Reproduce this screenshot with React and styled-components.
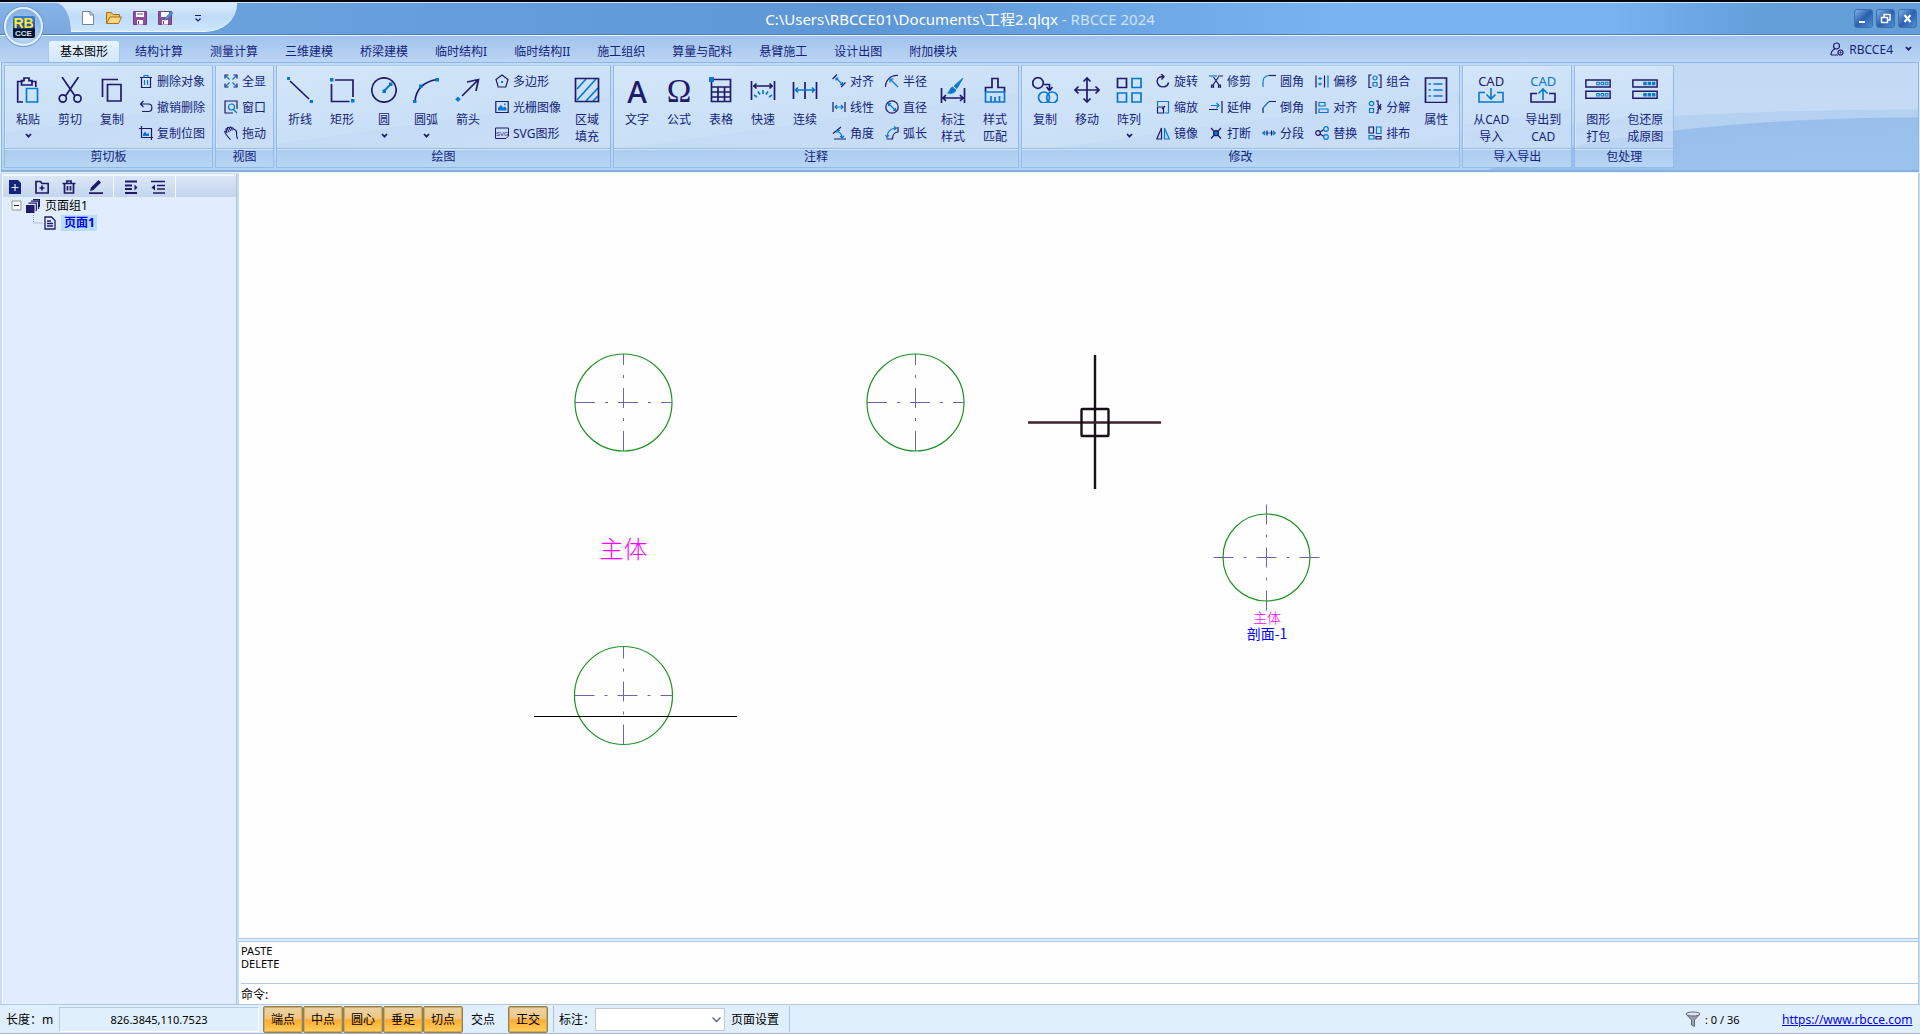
import React, { useState } from "react";
import styled, { createGlobalStyle } from "styled-components";

const ui = `"Noto Sans", "Noto Sans CJK SC", sans-serif`;
const navy = "#1f1a6b";
const blue = "#0a78cc";

const GlobalStyle = createGlobalStyle`
  * { box-sizing: border-box; }
  body { margin: 0; background: #dfecfb; overflow: hidden; }
  button, select, input { font: inherit; color: inherit; }
  button { border: 0; background: none; padding: 0; cursor: pointer; }
`;

const Window = styled.div`
  display: flex;
  flex-direction: column;
  height: 100vh;
  border-top: 2px solid #05070c;
  font: 12px/17px ${ui};
  color: #14247c;
`;

// Title bar
const TitleBar = styled.header`
  position: relative;
  display: flex;
  justify-content: space-between;
  height: 33px;
  border-top: 1px solid #cfe5fb;
  border-bottom: 1px solid #4f80c0;
  background: linear-gradient(90deg, #6da4de 0%, #679fdc 20%, #5d97d6 45%, #78b4f2 70%, #76b3f0 84%, #629ed8 92%, #659ed8 100%);
`;

const QuickBar = styled.div`
  display: flex;
  align-items: flex-start;
  width: 237px;
  height: 29px;
  border-radius: 0 0 32px 0 / 0 0 28px 0;
  border-bottom: 1px solid #eef7ff;
  background: linear-gradient(#d9ebfb, #bfdcf8 50%, #cde6fc);
`;

const AppCorner = styled.div`
  width: 71px;
  height: 31px;
  margin-right: 9px;
  border-radius: 0 15px 0 0 / 0 30px 0 0;
  background: linear-gradient(#86b4e8, #7aa8de);
`;

const AppButton = styled.button`
  position: absolute;
  z-index: 2;
  left: 4px;
  top: 4px;
  width: 39px;
  height: 39px;
  display: flex;
  align-items: center;
  justify-content: center;
  border: 2px solid #e2f1ff;
  border-radius: 50%;
  background: radial-gradient(circle at 50% 70%, #cfe6fb, #8fb9e8 60%, #7aa7dc);
  box-shadow: 0 0 0 1px #7399c9;
`;

const AppMark = styled.span`
  display: flex;
  flex-direction: column;
  align-items: center;
  width: 22px;
  height: 22px;
  border-radius: 2px;
  background: linear-gradient(#3b82d8, #1c4c94 55%, #0a142e 60%);
  color: #ffe83a;
  font: bold 14px/14px "Liberation Sans", sans-serif;
`;

const AppMarkSub = styled.span`
  color: #d5e2f5;
  font: bold 8px/7px "Liberation Sans", sans-serif;
`;

const QuickButton = styled.button`
  width: 16px;
  height: 16px;
  margin: 7px 10px 0 0;
  line-height: 0;
`;

const Title = styled.h1`
  position: absolute;
  left: 50%;
  top: 6px;
  margin: 0;
  transform: translateX(-50%);
  color: #fff;
  font: 15px/20px ${ui};
  white-space: nowrap;
`;

const TitleApp = styled.span`
  color: #cfe3fa;
`;

const WindowButtons = styled.div`
  display: flex;
  gap: 3px;
  padding: 6px 3px 0 0;
`;

const WindowButton = styled.button`
  width: 19px;
  height: 19px;
  border: 1px solid #3c6fb0;
  border-radius: 3px;
  line-height: 0;
  background: linear-gradient(135deg, #7fb0e6, #2c5fae 50%, #4f90d6);
`;

// Tabs
const TabBar = styled.nav`
  display: flex;
  align-items: flex-end;
  gap: 3px;
  height: 27px;
  padding-left: 48px;
  border-top: 1px solid #eaf4ff;
  background: linear-gradient(#a2c3ec, #bad5f5);
`;

const Tab = styled.button`
  height: 22px;
  padding: 0 11px;
  border: 1px solid ${(p) => (p.$active ? "#a4c8f0" : "transparent")};
  border-bottom: 0;
  border-radius: 3px 3px 0 0;
  white-space: nowrap;
  color: ${(p) => (p.$active ? "#000" : "#14247c")};
  background: ${(p) => (p.$active ? "linear-gradient(#e6f3ff, #d3e6fa)" : "none")};
`;

const UserButton = styled.button`
  display: flex;
  align-items: center;
  gap: 5px;
  height: 26px;
  margin-left: auto;
  padding-right: 8px;
`;

const UserName = styled.span`
  margin-right: 7px;
`;

// Ribbon
const Ribbon = styled.section`
  display: flex;
  gap: 2px;
  margin: 0 1px;
  padding: 2px 2px 2px;
  border: 1px solid #8db6e8;
  border-bottom: 2px solid #86afe2;
  background:
    radial-gradient(ellipse 484px 96px at 100% 150px, #9cc2ee 0, #9cc2ee 60%, #98beeb 99%, transparent 100%),
    radial-gradient(ellipse 700px 104px at 100% 150px, #b4d1f2 99%, transparent 100%),
    linear-gradient(#c3daf4, #c4daf5 45%, #b5d2f3);
`;

const GroupBox = styled.div`
  border: 1px solid #94bbe8;
  border-top-color: #a9c9ee;
  box-shadow: inset 0 1px #fff, inset 1px 0 #e1effd;
`;

const GroupBody = styled.div`
  display: flex;
  height: 82px;
  padding: 2px 2px 0;
  background: linear-gradient(172deg, rgba(213, 231, 249, 0.9) 0, rgba(203, 225, 247, 0.85) 60%, rgba(200, 221, 246, 0.7) 61%, rgba(214, 228, 250, 0.6) 100%);
`;

const GroupTitle = styled.div`
  height: 19px;
  border-top: 1px solid #94bbe8;
  box-shadow: inset 0 1px #d4e6fa;
  line-height: 16px;
  text-align: center;
  background: linear-gradient(#abcbef, #b8d6f5);
`;

const BigButton = styled.button`
  display: flex;
  flex-direction: column;
  align-items: center;
  min-width: 42px;
  height: 79px;
  padding: 9px 8px 0;
  white-space: pre;
`;

const BigLabel = styled.span`
  margin-top: 8px;
`;

const BigIcon = styled.span`
  display: flex;
  justify-content: center;
  width: 26px;
  height: 26px;
`;

const MenuMark = styled.span`
  display: flex;
  align-items: center;
  height: 15px;
`;

const SmallColumn = styled.div`
  display: flex;
  flex-direction: column;
`;

const SmallButton = styled.button`
  display: flex;
  align-items: center;
  gap: 4px;
  height: 26px;
  padding: 0 5px 0 6px;
  white-space: nowrap;
`;

const LetterIcon = styled.span`
  color: ${navy};
  font: ${(p) => (p.$serif ? '33px/28px "Liberation Serif", serif' : `500 30px/29px ${ui}`)};
`;

const CadIcon = styled.span`
  display: flex;
  flex-direction: column;
  align-items: center;
  gap: 2px;
  color: ${(p) => (p.$out ? blue : navy)};
  font-size: 13px;
  line-height: 9px;
`;

const Icon = ({ size = 14, height, children, w = 1.2 }) => (
  <svg width={size} height={height || size} viewBox={`0 0 ${size} ${height || size}`} fill="none" stroke={navy} strokeWidth={w} aria-hidden="true">
    {children}
  </svg>
);
const Big = ({ children }) => (
  <Icon size={26} w={1.7}>
    {children}
  </Icon>
);
const Chevron = ({ color = navy }) => (
  <Icon size={7} height={6} w={1.8}>
    <path d="M1 1l2.5 2.7L6 1" stroke={color} />
  </Icon>
);

const icons = {
  paste: (
    <Big>
      <path d="M8 25H2.7V4.5H8M16 4.5h4.8V10M6.5 8V3.7H9V1h5v2.700h3V8z" />
      <path d="M11.500 11.500h11V25h-11z" stroke={blue} />
    </Big>
  ),
  cut: (
    <Big>
      <path d="M5 0l13 19M21.500 0L8.500 19" />
      <circle cx="5.800" cy="21.500" r="3.600" />
      <circle cx="20.500" cy="21.500" r="3.600" />
    </Big>
  ),
  copy: (
    <Big>
      <path d="M3.500 20V2.500H19M8.500 7.500h13.500V24H8.500z" />
    </Big>
  ),
  line: (
    <Big>
      <path d="M3 4l19 18" />
      <path d="M-.5 -.5h3.500v3.500h-3.500zM22.800 23h3.200v3h-3.200z" fill={blue} stroke="none" />
    </Big>
  ),
  rect: (
    <Big>
      <path d="M6 3h18v17M2.500 7v17.500h18" />
      <path d="M1 1h3.500v3.500H1zM22 22h3.500v3.500H22z" fill={blue} stroke="none" />
    </Big>
  ),
  circle: (
    <Big>
      <circle cx="13" cy="13" r="12.200" />
      <path d="M13 14l7-7" stroke={blue} strokeWidth="2" />
      <path d="M11.500 12.500h3.500v3.500h-3.500zM18 5.500h3.500V9H18z" fill={blue} stroke="none" />
    </Big>
  ),
  arc: (
    <Big>
      <path d="M2 24C3 14 9 5 24 2.500" />
      <path d="M0 23h3.500v3.500H0zM6 7.500h3.500V11H6zM22.500 1H26v3.500h-3.500z" fill={blue} stroke="none" />
    </Big>
  ),
  arrow: (
    <Big>
      <path d="M7 19L23 3M12 5l11.500-2.500L21 14" />
      <path d="M3 19.500l2.800 2.800L3 25 .2 22.300z" fill={blue} stroke="none" />
    </Big>
  ),
  hatch: (
    <Big>
      <path d="M3 12L12 2M3 23L22 2M12 24L24 11M19 24l5-5" stroke={blue} />
      <path d="M1.500 1.500h23v23h-23z" />
    </Big>
  ),
  text: <LetterIcon>A</LetterIcon>,
  omega: <LetterIcon $serif>Ω</LetterIcon>,
  table: (
    <Big>
      <path d="M3.500 2.500h19v22h-19zM3.500 10h19M3.500 15h19M3.500 20h19M10 10v14M16.500 10v14" />
      <path d="M1 0h5v5H1z" fill={blue} stroke="none" />
    </Big>
  ),
  quick: (
    <Big>
      <path d="M1.500 4v19M24.500 4v19M3 9h20M6.500 6.500L4 9l2.500 2.500M19.500 6.500L22 9l-2.500 2.500" />
      <path d="M4 18l3 2M8 14.500l2 3M13 13v4M18 14.500l-2 3M22 18l-3 2" stroke={blue} />
    </Big>
  ),
  chain: (
    <Big>
      <path d="M1.500 5v17M13 5v17M24.500 5v17" />
      <path d="M3 13h20M6 10.500L3.500 13 6 15.500M20 10.500l2.500 2.500-2.500 2.500" stroke={blue} />
    </Big>
  ),
  dimStyle: (
    <Big>
      <path d="M1.500 11v15M24.500 11v15M3 21h20M6 18l-3 3 3 3M20 18l3 3-3 3" />
      <path d="M23 1L14 9l3 2.500zM12.500 10l3.500 3c-1 3-5 4-8.500 3 2.500-1 2-5 5-6z" fill={blue} stroke={blue} strokeWidth=".8" />
    </Big>
  ),
  match: (
    <Big>
      <path d="M3.500 15v-4.500H10V1.500h6v9h6.500V15" />
      <path d="M3.500 15h19v10h-19zM9 19v6M13 20v5M17.500 19v6" stroke={blue} />
    </Big>
  ),
  copy2: (
    <Big>
      <circle cx="6" cy="6" r="5.300" />
      <path d="M12 7.500h5.500V13M14.500 10l3 3.500 3-3.500" />
      <circle cx="12" cy="20.500" r="5.500" stroke={blue} />
      <circle cx="20.200" cy="20.500" r="5.500" stroke={blue} />
    </Big>
  ),
  move: (
    <Big>
      <path d="M13 1v24M1 13h24M9.500 4.500L13 1l3.500 3.500M9.500 21.500L13 25l3.500-3.500M4.500 9.500L1 13l3.500 3.500M21.500 9.500L25 13l-3.500 3.500" />
    </Big>
  ),
  array: (
    <Big>
      <path d="M1.500 1.500h9v9h-9z" />
      <path d="M16 1.500h9v9h-9zM1.500 16h9v9h-9zM16 16h9v9h-9z" stroke={blue} />
    </Big>
  ),
  props: (
    <Big>
      <path d="M2.500 1h21v24.500h-21z" />
      <path d="M10.500 7h9M10.500 13h9M10.500 19h9M5.500 7H8M5.500 13H8M5.500 19H8" stroke={blue} />
    </Big>
  ),
  cadIn: (
    <CadIcon>
      CAD
      <Icon size={26} height={15} w={1.6}>
        <path d="M7 4.500H1V14h24V4.500h-6" stroke={blue} />
        <path d="M13 0v11M8.500 6.500L13 11l4.500-4.500" stroke={blue} />
      </Icon>
    </CadIcon>
  ),
  cadOut: (
    <CadIcon $out>
      CAD
      <Icon size={26} height={15} w={1.6}>
        <path d="M7 5.500H1V14h24V5.500h-6" />
        <path d="M13 12V1M8.500 5.500L13 1l4.500 4.500" stroke={blue} />
      </Icon>
    </CadIcon>
  ),
  pack: (
    <Icon size={30} height={26} w={1.7}>
      <path d="M1 1.500h28v8H1zM1 14.500h28v8H1z" />
      <path d="M13.500 4h3v3h-3zM18.500 4h3v3h-3zM23.500 4h3v3h-3zM13.500 17h3v3h-3zM18.500 17h3v3h-3zM23.500 17h3v3h-3z" stroke={blue} strokeWidth="1.200" />
    </Icon>
  ),
  unpack: (
    <Icon size={30} height={26} w={1.7}>
      <path d="M1 1.500h28v8H1zM1 14.500h28v8H1z" />
      <path d="M13 3.500h4v4h-4zM18 3.500h4v4h-4zM23 3.500h4v4h-4zM13 16.500h4v4h-4zM18 16.500h4v4h-4zM23 16.500h4v4h-4z" fill={blue} stroke="none" />
    </Icon>
  ),
  trash: (
    <Icon>
      <path d="M1 3.500h12M2.500 3.500v10h9v-10" />
      <path d="M5 3.500v-2h4v2M5.500 6v5M8.500 6v5" stroke={blue} />
    </Icon>
  ),
  undo: (
    <Icon>
      <path d="M4.500 1L1.500 4l3 3M2 4h7.500c4.500 0 4.500 7.500 0 7.500H3" />
    </Icon>
  ),
  bitmap: (
    <Icon>
      <path d="M2.500 0v11.500H14M0 2.500h12.500V14" />
      <path d="M4 10V8l2-2.500L8 8l2-1v3z" fill={blue} stroke="none" />
    </Icon>
  ),
  fit: (
    <Icon>
      <path d="M1 4.500V1h3.500M13 9.500V13H9.500M9.500 1H13v3.500M1 9.500V13h3.500" />
      <path d="M1.500 1.500l4 4M12.500 1.500l-4 4M1.500 12.500l4-4M12.500 12.500l-4-4" stroke={blue} />
    </Icon>
  ),
  windowZoom: (
    <Icon>
      <path d="M13 9V1H1v12h8" />
      <circle cx="7.500" cy="7" r="3" stroke={blue} />
      <path d="M9.500 9.500L13 13" stroke={blue} />
    </Icon>
  ),
  hand: (
    <Icon w={1.1}>
      <path d="M6.500 13.500C4 11 1 8 .7 5.500c1-.6 1.800.3 2.500 1.500L1.800 3.500c.3-1 1.500-.8 2 .2L3.300 2c.6-1 1.600-.6 2.100.3C5.800.8 7 .8 7.500 2c1-.6 1.800 0 2 1C12.500 4 13 6 12.500 8c0 2 .5 3.500 1.200 5M3.800 3.700l1.400 2.500M5.400 2.500L6.700 5M7.500 2l.8 2.500" />
    </Icon>
  ),
  polygon: (
    <Icon>
      <path d="M7 1l6 4.500L10.800 13H3.200L1 5.500z" />
      <path d="M6 7h2v2H6z" fill={blue} stroke="none" />
    </Icon>
  ),
  raster: (
    <Icon>
      <path d="M.8 1.500h12.400v11H.8z" />
      <path d="M3 10.500V8l3-3 2 2.500 2-1 1.500 2v2zM9 3.500h1.500V5H9z" fill={blue} stroke="none" />
    </Icon>
  ),
  svgFile: (
    <Icon w={1}>
      <path d="M.5 2h13v8L11 12.500H.5z" />
      <text x="1" y="9.500" fontSize="6" fill={navy} stroke="none" fontFamily="Liberation Sans">
        SVG
      </text>
    </Icon>
  ),
  dimAlign: (
    <Icon>
      <path d="M5 .500L.5 5M13.500 8.500L9 13" />
      <path d="M4 4l6.500 6.500M4 6.500V4h2.500M8 10.500h2.500V8" stroke={blue} />
    </Icon>
  ),
  dimLinear: (
    <Icon>
      <path d="M1 2v10M13 2v10" />
      <path d="M3 7h8M5 5L3 7l2 2M9 5l2 2-2 2" stroke={blue} />
    </Icon>
  ),
  dimAngle: (
    <Icon>
      <path d="M1 7.500L9 1M2 13h12" />
      <path d="M6 5.500c3 1.500 4 3.500 4 6M8 10l2 2 2-2M5 7V4.500h3" stroke={blue} />
    </Icon>
  ),
  radius: (
    <Icon>
      <path d="M.5 13C0 7 5 1 13 1.500" />
      <path d="M13 13L5 5M5 8.500V5h3.500" stroke={blue} />
    </Icon>
  ),
  diameter: (
    <Icon>
      <circle cx="7" cy="7" r="6.200" />
      <path d="M3.500 3.500l7 7M3.500 6V3.500H6M8 10.500h2.500V8" stroke={blue} />
    </Icon>
  ),
  arcLen: (
    <Icon>
      <path d="M13 1v5c-3 0-5.500 2.500-5.500 7H2M7.500 13h-6" />
      <path d="M2 11c0-5 4-9 9-9M9 .500L11.500 2 9 4M.5 9L2 11.500 4 9" stroke={blue} />
    </Icon>
  ),
  rotate: (
    <Icon w={1.4}>
      <path d="M7.500 2.500C2 2 .5 6 1.500 9c2 5.500 10 5 11-.500" />
      <path d="M5 0l3 2.500-2.500 3" />
    </Icon>
  ),
  scale: (
    <Icon>
      <path d="M1.500 7h6v6h-6z" />
      <path d="M1.500 6V1.500h11V13H8.500" stroke={blue} />
      <path d="M6 9l3-3" />
    </Icon>
  ),
  mirror: (
    <Icon>
      <path d="M5.500 2v11H.8z" />
      <path d="M8.500 2v11h4.700z" stroke={blue} />
    </Icon>
  ),
  trim: (
    <Icon>
      <path d="M4.500 3L10 11M9.500 3L4 11M9 2h5M2.500 11.200h2v2h-2zM9.500 11.200h2v2h-2z" />
      <path d="M0 2h8" stroke={blue} />
    </Icon>
  ),
  extend: (
    <Icon>
      <path d="M0 9.500h9M13 1v12" />
      <path d="M2 5.500h8M7.500 3l2.500 2.500L7.500 8" stroke={blue} />
    </Icon>
  ),
  breakAt: (
    <Icon>
      <path d="M2 2l10 10.500M12 2L2 12.500" />
      <circle cx="7" cy="7.200" r="2.500" fill={blue} />
    </Icon>
  ),
  fillet: (
    <Icon>
      <path d="M6.500 1.500H14" />
      <path d="M1 13V8c0-3.500 2-6 5.500-6.500" stroke={blue} />
    </Icon>
  ),
  chamfer: (
    <Icon>
      <path d="M7 1.500h7M1 13V8" />
      <path d="M1 8l6-6.500" stroke={blue} />
    </Icon>
  ),
  segment: (
    <Icon>
      <path d="M0 7h14M3 5L1 7l2 2M11 5l2 2-2 2" stroke={blue} />
      <path d="M5 4.500v5M9.500 4.500v5" />
    </Icon>
  ),
  offset: (
    <Icon>
      <path d="M1 1.500v12M9.500 1.500v12" />
      <path d="M13 1.500v12M3 4.500h4M3 10h4M5 3v3M5 8.500v3" stroke={blue} />
    </Icon>
  ),
  align: (
    <Icon>
      <path d="M1 1v13" />
      <path d="M4 2.500h6v3.500H4zM4 9h9v3.500H4z" stroke={blue} />
    </Icon>
  ),
  replace: (
    <Icon>
      <path d="M5 6l4-2.500M5 8l4 2.500" />
      <circle cx="3" cy="7" r="2.300" />
      <circle cx="11" cy="3" r="2.300" stroke={blue} />
      <circle cx="11" cy="11" r="2.300" stroke={blue} />
    </Icon>
  ),
  combine: (
    <Icon>
      <path d="M3.500 1H1v12.500h2.500M10.500 1H13v12.500h-2.500" />
      <circle cx="7" cy="4" r="2" stroke={blue} />
      <path d="M5 8.500h4V12H5z" stroke={blue} />
    </Icon>
  ),
  explode: (
    <Icon>
      <path d="M8 1h2v4M10 9v4H8M9 7h4.500M10 4l3 6M13 4l-3 6" />
      <circle cx="3.500" cy="3.500" r="2.200" stroke={blue} />
      <path d="M1.500 8.500h4v4h-4z" stroke={blue} />
    </Icon>
  ),
  arrange: (
    <Icon>
      <path d="M1 1h4.500v6H1zM8 10.500h5V13H8z" />
      <path d="M8.500 1h4.500v6.500H8.500zM1 9.500h5V13H1z" stroke={blue} />
    </Icon>
  ),
};

const groups = [
  { title: "剪切板", items: [
    { icon: "paste", label: "粘贴", menu: true },
    { icon: "cut", label: "剪切" },
    { icon: "copy", label: "复制" },
    [["trash", "删除对象"], ["undo", "撤销删除"], ["bitmap", "复制位图"]],
  ] },
  { title: "视图", items: [[["fit", "全显"], ["windowZoom", "窗口"], ["hand", "拖动"]]] },
  { title: "绘图", items: [
    { icon: "line", label: "折线" },
    { icon: "rect", label: "矩形" },
    { icon: "circle", label: "圆", menu: true },
    { icon: "arc", label: "圆弧", menu: true },
    { icon: "arrow", label: "箭头" },
    [["polygon", "多边形"], ["raster", "光栅图像"], ["svgFile", "SVG图形"]],
    { icon: "hatch", label: "区域\n填充" },
  ] },
  { title: "注释", items: [
    { icon: "text", label: "文字" },
    { icon: "omega", label: "公式" },
    { icon: "table", label: "表格" },
    { icon: "quick", label: "快速" },
    { icon: "chain", label: "连续" },
    [["dimAlign", "对齐"], ["dimLinear", "线性"], ["dimAngle", "角度"]],
    [["radius", "半径"], ["diameter", "直径"], ["arcLen", "弧长"]],
    { icon: "dimStyle", label: "标注\n样式" },
    { icon: "match", label: "样式\n匹配" },
  ] },
  { title: "修改", items: [
    { icon: "copy2", label: "复制" },
    { icon: "move", label: "移动" },
    { icon: "array", label: "阵列", menu: true },
    [["rotate", "旋转"], ["scale", "缩放"], ["mirror", "镜像"]],
    [["trim", "修剪"], ["extend", "延伸"], ["breakAt", "打断"]],
    [["fillet", "圆角"], ["chamfer", "倒角"], ["segment", "分段"]],
    [["offset", "偏移"], ["align", "对齐"], ["replace", "替换"]],
    [["combine", "组合"], ["explode", "分解"], ["arrange", "排布"]],
    { icon: "props", label: "属性" },
  ] },
  { title: "导入导出", items: [
    { icon: "cadIn", label: "从CAD\n导入" },
    { icon: "cadOut", label: "导出到\nCAD" },
  ] },
  { title: "包处理", items: [
    { icon: "pack", label: "图形\n打包" },
    { icon: "unpack", label: "包还原\n成原图" },
  ] },
];

const tabs = ["基本图形", "结构计算", "测量计算", "三维建模", "桥梁建模", "临时结构I", "临时结构II", "施工组织", "算量与配料", "悬臂施工", "设计出图", "附加模块"];

// Work area
const Main = styled.main`
  flex: 1;
  display: flex;
  min-height: 0;
  padding: 0 1px;
  border-top: 1px solid #e8f3ff;
  background: #c9dcf3;
`;

const SidePanel = styled.aside`
  width: 235px;
  margin: 1px 2px 0 1px;
  border-right: 1px solid #aac4e4;
  border-left: 1px solid #f4faff;
  background: #e1edfc;
  color: #000;
`;

const SideTools = styled.div`
  display: flex;
  align-items: center;
  gap: 13px;
  height: 23px;
  padding-left: 5px;
  border-top: 2px solid #f2f8ff;
  background: linear-gradient(#dbe7f6, #c3d5ed);
`;

const SideTool = styled.button`
  width: 14px;
  height: 14px;
  line-height: 0;
`;

const ToolDivider = styled.span`
  width: 1px;
  height: 21px;
  background: #f6faff;
  margin: 0 -3px;
`;

const Tree = styled.ul`
  margin: 0;
  padding: 0;
  list-style: none;
`;

const TreeRow = styled.li`
  display: flex;
  align-items: center;
  gap: 4px;
  height: 17px;
  padding-left: ${(p) => (p.$child ? 30 : 8)}px;
`;

const TreeLabel = styled.span`
  padding: 0 2px 0 1px;
  ${(p) => p.$selected && "padding: 0 2px 0 3px; background: #b9dcf8; color: #0000f0; font-weight: bold; line-height: 16px;"}
`;

const Workspace = styled.div`
  flex: 1;
  display: flex;
  flex-direction: column;
  min-width: 0;
  background: #fdfefd;
  border-right: 1px solid #b0c8e4;
`;

const Sheet = styled.div`
  flex: 1;
  min-height: 0;
  border-top: 1px solid #fff;
`;

const Drawing = styled.svg`
  display: block;
  width: 100%;
  height: 100%;
`;

const Log = styled.div`
  height: 42px;
  padding: 2px 2px 0;
  border-top: 1px solid #b0c8e4;
  box-shadow: 0 -2px #e0edfb, 0 -3px #b0c8e4;
  color: #000;
  font: 11px/13px ${ui};
`;

const Command = styled.label`
  display: flex;
  align-items: center;
  height: 21px;
  margin-left: 2px;
  border-top: 1px solid #b0c8e4;
  color: #000;
`;

const CommandInput = styled.input`
  flex: 1;
  height: 18px;
  padding: 0;
  border: 0;
  outline: 0;
  background: none;
`;

const StatusBar = styled.footer`
  display: flex;
  align-items: center;
  height: 30px;
  border-top: 1px solid #b0c8e4;
  border-bottom: 1px solid #a7b4ca;
  background: #e0effc;
  color: #000;
`;

const Unit = styled.span`
  width: 59px;
  padding-left: 6px;
`;

const Coordinates = styled.output`
  width: 200px;
  height: 25px;
  margin-right: 4px;
  border: 1px solid #fff;
  border-top-color: #b4cbe6;
  border-left-color: #b4cbe6;
  line-height: 23px;
  font-size: 11px;
  text-align: center;
`;

const SnapGroup = styled.div`
  display: flex;
  margin-right: 5px;
`;

const Snap = styled.button`
  width: 40px;
  height: 27px;
  border: ${(p) => (p.$on ? "1px solid #8f8353" : "1px solid transparent")};
  border-radius: 2px;
  box-shadow: ${(p) => (p.$on ? "inset 0 0 0 1px #d5a858" : "none")};
  background: ${(p) => (p.$on ? "linear-gradient(#e9d2a6, #f1c884 45%, #fdab33 52%, #ffd05a)" : "none")};
`;

const StatusDivider = styled.span`
  width: 1px;
  height: 26px;
  margin-right: 5px;
  background: #a9c3e2;
`;

const DimLabel = styled.label`
  display: flex;
  align-items: center;
`;

const DimSelect = styled.select`
  appearance: none;
  width: 130px;
  height: 23px;
  border: 1px solid #c3c8cc;
  background: #fff;
`;

const SelectBox = styled.span`
  position: relative;
  display: flex;
  svg {
    position: absolute;
    right: 4px;
    top: 9px;
    pointer-events: none;
  }
`;

const PageSetup = styled.button`
  margin-left: 6px;
  margin-right: 10px;
`;

const Filter = styled.span`
  display: flex;
  align-items: center;
  gap: 4px;
  width: 97px;
  margin-left: auto;
  font-size: 11px;
`;

const SiteLink = styled.a`
  width: 134px;
  margin-right: 4px;
  color: #0000ee;
`;

const centreDash = "20 10 3 10";

const Hole = ({ x, y, r, over = 0 }) => (
  <g fill="none">
    <path d={`M${x - r - over} ${y}H${x + r + over}M${x} ${y + r + over}V${y - r - over}`} stroke="#6c66a8" strokeDasharray={centreDash} />
    <circle cx={x} cy={y} r={r} stroke="#1e9322" strokeWidth="1.2" />
  </g>
);

const RibbonItem = ({ item }) => {
  if (Array.isArray(item)) {
    return (
      <SmallColumn>
        {item.map(([icon, label]) => (
          <SmallButton key={label}>
            {icons[icon]}
            {label}
          </SmallButton>
        ))}
      </SmallColumn>
    );
  }
  return (
    <BigButton>
      <BigIcon>{icons[item.icon]}</BigIcon>
      <BigLabel>{item.label}</BigLabel>
      {item.menu && <MenuMark><Chevron /></MenuMark>}
    </BigButton>
  );
};

const App = () => {
  const [tab, setTab] = useState(tabs[0]);
  const [snaps, setSnaps] = useState({ 端点: true, 中点: true, 圆心: true, 垂足: true, 切点: true, 交点: false });
  const [ortho, setOrtho] = useState(true);
  const [command, setCommand] = useState("");

  const toggle = (name) => setSnaps({ ...snaps, [name]: !snaps[name] });

  return (
    <Window>
      <GlobalStyle />
      <TitleBar>
        <AppButton>
          <AppMark>
            RB
            <AppMarkSub>CCE</AppMarkSub>
          </AppMark>
        </AppButton>
        <QuickBar>
          <AppCorner />
          <QuickButton aria-label="新建">
            <Icon size={14} w={1}>
              <path d="M1.500.5h7.500l3.500 3.500v9.500h-11zM9 .5V4h3.500" fill="#fff" stroke="#7d8594" />
            </Icon>
          </QuickButton>
          <QuickButton aria-label="打开">
            <Icon size={16} height={14} w={1}>
              <path d="M.5 12.500v-11h5l1.500 2h6.500V6" fill="#f3c062" stroke="#a8711c" />
              <path d="M.5 12.500L4 6h11.500L12.500 12.500z" fill="#fbd684" stroke="#a8711c" />
            </Icon>
          </QuickButton>
          <QuickButton aria-label="保存">
            <Icon size={14} w={1}>
              <path d="M.5.5h13v13H.5z" fill="#8f4f98" stroke="#76407f" />
              <path d="M3 1h8v5H3zM4 9h6v4.500H4z" fill="#fff" stroke="none" />
              <path d="M4 3h6M5.500 10v3" stroke="#76407f" />
            </Icon>
          </QuickButton>
          <QuickButton aria-label="另存为">
            <Icon size={16} height={14} w={1}>
              <path d="M.5.5h13v13H.5z" fill="#8f4f98" stroke="#76407f" />
              <path d="M3 1h8v5H3zM4 9h6v4.500H4z" fill="#fff" stroke="none" />
              <path d="M5.500 10v3" stroke="#76407f" />
              <path d="M7 7.500L13 .5l2 1.700L9 8.500l-2.500.7z" fill="#4d93da" stroke="#2f6fb5" strokeWidth=".6" />
            </Icon>
          </QuickButton>
          <QuickButton aria-label="自定义">
            <Icon size={34} height={14}>
              <path d="M11 4.500h6M11.500 7.500L14 10l2.500-2.500" />
            </Icon>
          </QuickButton>
        </QuickBar>
        <Title>
          C:\Users\RBCCE01\Documents\工程2.qlqx <TitleApp>- RBCCE 2024</TitleApp>
        </Title>
        <WindowButtons>
          <WindowButton aria-label="最小化">
            <Icon size={17} w={2}>
              <path d="M4 12h6" stroke="#fff" />
            </Icon>
          </WindowButton>
          <WindowButton aria-label="还原">
            <Icon size={17} w={1.5}>
              <path d="M7 7V4.500h6V10h-2M4.500 7.500h6v5h-6z" stroke="#fff" />
            </Icon>
          </WindowButton>
          <WindowButton aria-label="关闭">
            <Icon size={17} w={2.2}>
              <path d="M5.500 5l6 7M11.500 5l-6 7" stroke="#fff" />
            </Icon>
          </WindowButton>
        </WindowButtons>
      </TitleBar>

      <TabBar>
        {tabs.map((name) => (
          <Tab key={name} $active={name === tab} onClick={() => setTab(name)}>
            {name}
          </Tab>
        ))}
        <UserButton>
          <Icon>
            <circle cx="6.500" cy="4" r="3" />
            <path d="M1 13c0-3.500 1-5 4-6M1 13h7" />
            <circle cx="10.500" cy="10.500" r="2.500" />
            <path d="M10.500 9.500v2M9.500 10.500h2" />
          </Icon>
          <UserName>RBCCE4</UserName>
          <Chevron />
        </UserButton>
      </TabBar>

      <Ribbon>
        {groups.map((group) => (
          <GroupBox key={group.title}>
            <GroupBody>
              {group.items.map((item, i) => (
                <RibbonItem key={i} item={item} />
              ))}
            </GroupBody>
            <GroupTitle>{group.title}</GroupTitle>
          </GroupBox>
        ))}
      </Ribbon>

      <Main>
        <SidePanel>
          <SideTools>
            <SideTool aria-label="新建页面">
              <Icon>
                <path d="M1 0h9l3 3v11H1z" fill="#14247c" stroke="none" />
                <path d="M7 4v7M3.500 7.500h7" stroke="#e6f0fc" />
              </Icon>
            </SideTool>
            <SideTool aria-label="新建组">
              <Icon w={1.7}>
                <path d="M1 1.500h4.500l1.500 2h6.200V13H1zM7 5.500v5M4.500 8h5" />
              </Icon>
            </SideTool>
            <SideTool aria-label="删除">
              <Icon w={1.7}>
                <path d="M.5 3.500h13M2.500 3.500V13h9V3.500M5 3V1h4v2M5.500 6v4.500M8.500 6v4.500" />
              </Icon>
            </SideTool>
            <SideTool aria-label="重命名">
              <Icon w={1.7}>
                <path d="M0 13.200h14M2 10l8.500-8.500" />
                <path d="M1 11l1-3.500L9.500 0l2.500 2.500-7.500 7.500z" fill={navy} stroke="none" />
              </Icon>
            </SideTool>
            <ToolDivider />
            <SideTool aria-label="展开">
              <Icon w={1.8}>
                <path d="M1 1.500h12M1 5.500h7M1 9h7M1 13h12" />
                <path d="M10.500 4.500v6l3-3z" fill={navy} stroke="none" />
              </Icon>
            </SideTool>
            <SideTool aria-label="折叠">
              <Icon w={1.5}>
                <path d="M0 1.500h14M6 5.500h8M6 9h8M2 13h12" />
                <path d="M4 4.500v6l-3.500-3z" fill={navy} stroke="none" />
              </Icon>
            </SideTool>
            <ToolDivider />
          </SideTools>
          <Tree>
            <TreeRow>
              <Icon size={11} w={1}>
                <path d="M1 1h9v9H1z" fill="#fff" stroke="#8b98a8" />
                <path d="M3 5.500h5" />
              </Icon>
              <Icon>
                <path d="M0 6h8.500v8H0z" fill={navy} stroke="none" />
                <path d="M2.500 4.200h7.800V12M5 2.200h7.500V10M7 .6h6.500V8" />
              </Icon>
              <TreeLabel>页面组1</TreeLabel>
            </TreeRow>
            <TreeRow $child>
              <Icon size={24} height={16} w={1.3}>
                <path d="M.5 0v8H10" stroke="#8492a8" strokeWidth="1" strokeDasharray="1 1" />
                <path d="M12 2h6.500L22 5.500V14H12zM14 6h4M14 8.500h6M14 11h6" />
              </Icon>
              <TreeLabel $selected>页面1</TreeLabel>
            </TreeRow>
          </Tree>
        </SidePanel>

        <Workspace>
          <Sheet>
            <Drawing>
              <Hole x={384.5} y={228.5} r={48.5} />
              <Hole x={676.5} y={228.5} r={48.5} />
              <Hole x={384.5} y={521.5} r={49} />
              <Hole x={1027.5} y={383.5} r={43.5} over={9.5} />
              <path d="M295 542.500H498" stroke="#000" strokeWidth="1.2" />
              <g textAnchor="middle" fontWeight="300" fontFamily="Noto Sans CJK SC">
                <text x="384.5" y="384" fontSize="24" fill="#ff00ff">主体</text>
                <text x="1028" y="449" fontSize="14" fill="#ff00ff">主体</text>
                <text x="1028" y="465" fontSize="14" fontWeight="400" fill="#0000ff">剖面-1</text>
              </g>
              <g fill="none" stroke="#161018" strokeWidth="2.4">
                <path d="M856 181V315" />
                <path d="M789 248.500H922" stroke="#40202e" />
                <rect x="842.5" y="235" width="27" height="27" rx="1" />
              </g>
            </Drawing>
          </Sheet>
          <Log>
            <div>PASTE</div>
            <div>DELETE</div>
          </Log>
          <Command>
            命令:
            <CommandInput value={command} onChange={(e) => setCommand(e.target.value)} />
          </Command>
        </Workspace>
      </Main>

      <StatusBar>
        <Unit>长度：m</Unit>
        <Coordinates>826.3845,110.7523</Coordinates>
        <SnapGroup>
          {Object.keys(snaps).map((name) => (
            <Snap key={name} $on={snaps[name]} onClick={() => toggle(name)}>
              {name}
            </Snap>
          ))}
        </SnapGroup>
        <SnapGroup>
          <Snap $on={ortho} onClick={() => setOrtho(!ortho)}>
            正交
          </Snap>
        </SnapGroup>
        <StatusDivider />
        <DimLabel>
          标注：
          <SelectBox>
            <DimSelect defaultValue="">
              <option value=""></option>
            </DimSelect>
            <Icon size={9} height={6} w={1.3}>
              <path d="M.5.5l4 4 4-4" stroke="#5b6478" />
            </Icon>
          </SelectBox>
        </DimLabel>
        <PageSetup>页面设置</PageSetup>
        <StatusDivider />
        <Filter>
          <Icon size={16} height={16} w={1}>
            <path d="M1 3l5.500 6v5l3 1.500V9L15 3z" fill="#9a9fb4" stroke="#63687e" />
            <ellipse cx="8" cy="3" rx="7" ry="2" fill="#dfe2ec" stroke="#63687e" />
          </Icon>
          : 0 / 36
        </Filter>
        <SiteLink href="https://www.rbcce.com">https://www.rbcce.com</SiteLink>
      </StatusBar>
    </Window>
  );
};

export default App;
